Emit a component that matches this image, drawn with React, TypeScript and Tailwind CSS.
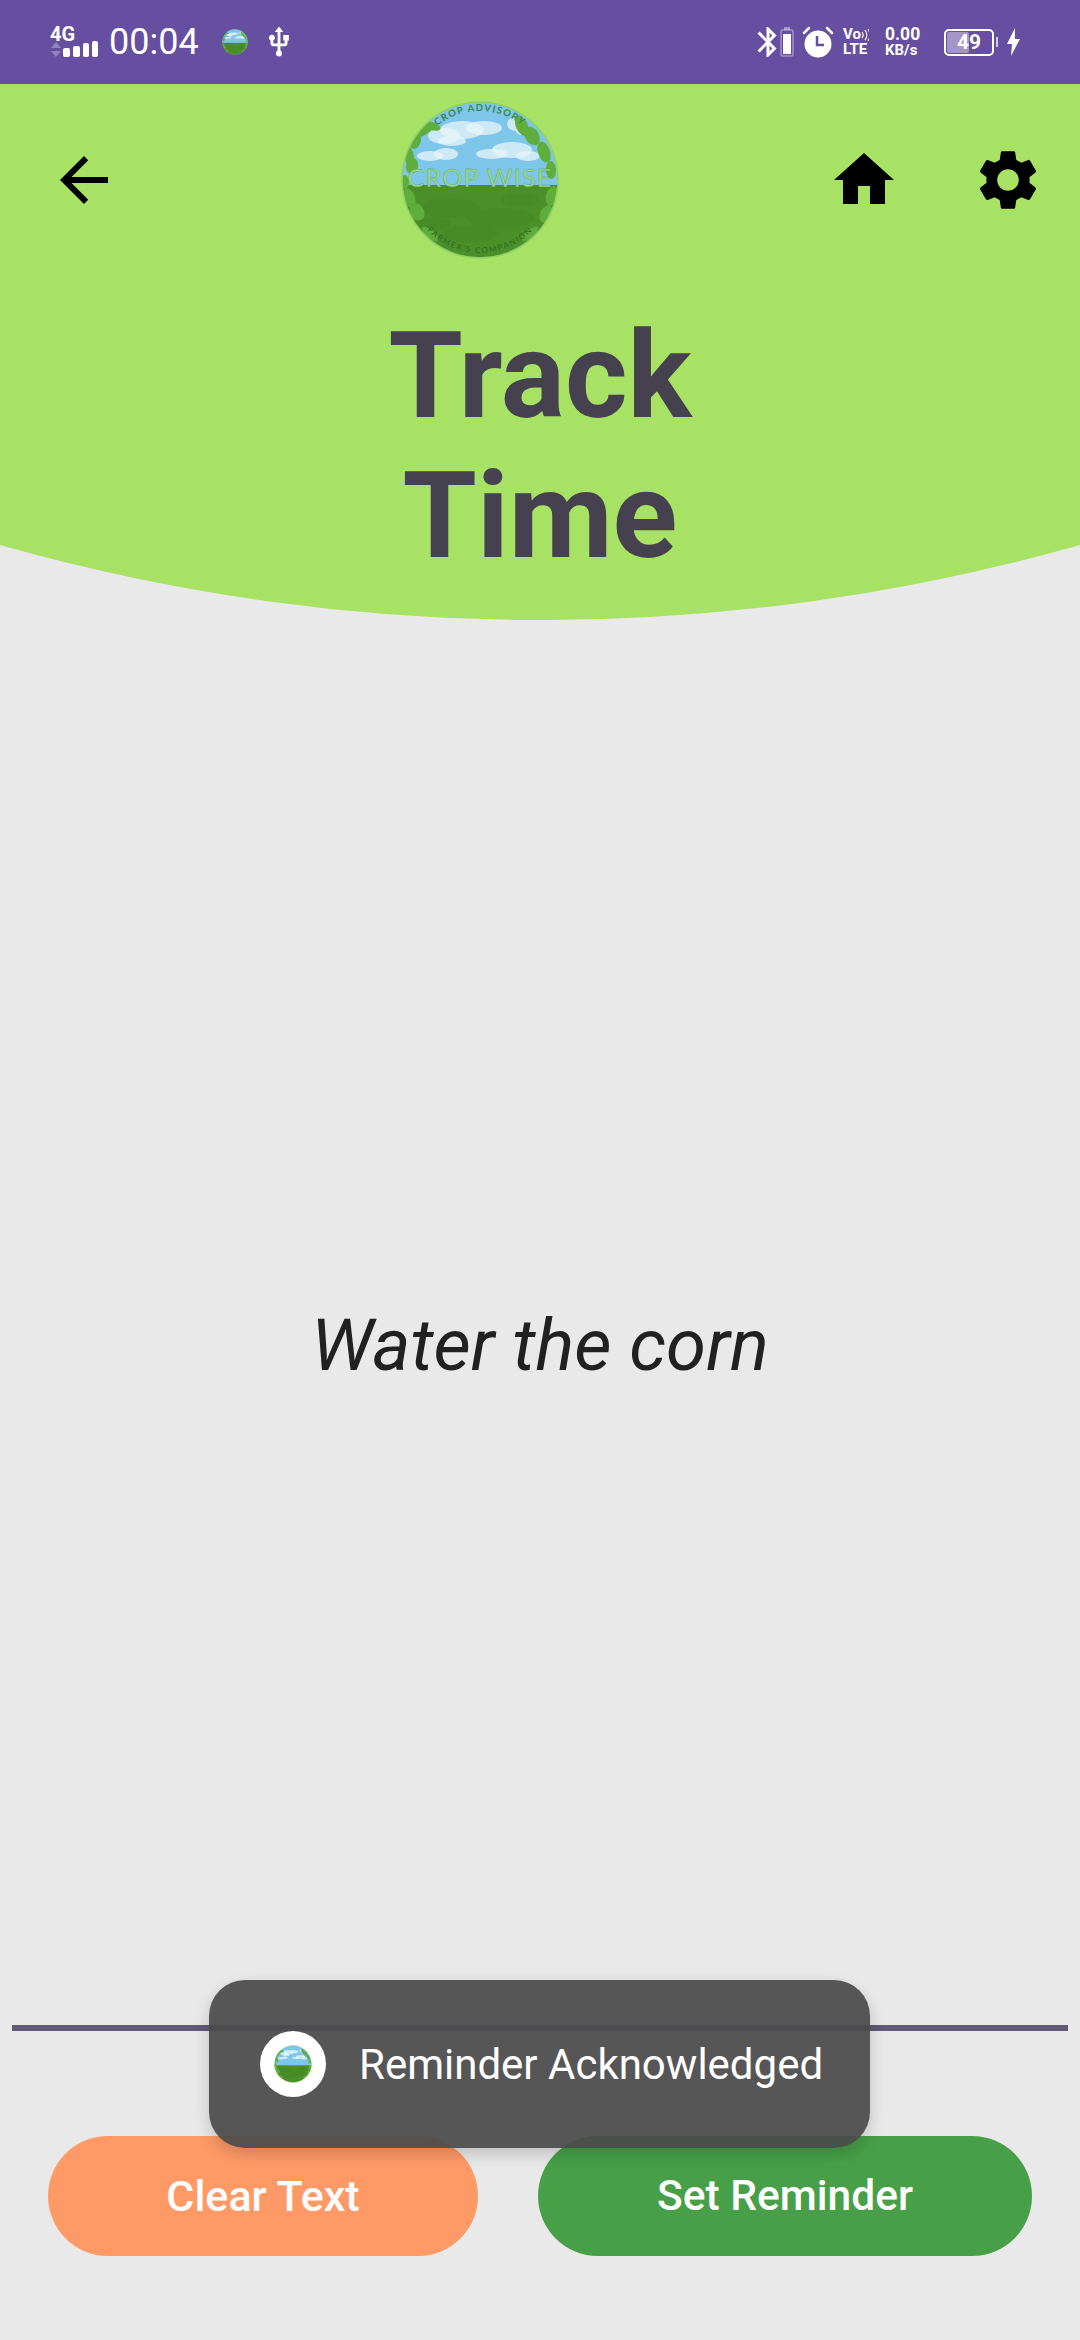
import { MdArrowBack, MdBluetooth, MdHome, MdSettings, MdUsb } from 'react-icons/md';

const leaves = [
  [24, 30, 12, 5, -35],
  [32, 26, 9, 4, 20],
  [15, 40, 6, 9, 10],
  [9, 56, 5, 10, -10],
  [12, 66, 6, 8, 15],
  [5, 82, 4, 7, 0],
  [9, 98, 6, 10, -20],
  [17, 112, 7, 9, -30],
  [30, 134, 10, 4, 40],
  [122, 26, 6, 11, -25],
  [132, 36, 7, 10, -30],
  [144, 52, 6, 11, -20],
  [151, 70, 5, 9, -5],
  [152, 96, 6, 10, 15],
  [146, 114, 6, 9, 25],
  [130, 134, 10, 4, -40],
];

const clouds = [
  [44, 36, 16, 8],
  [62, 30, 22, 9],
  [84, 28, 18, 7],
  [52, 41, 14, 5],
  [92, 54, 16, 5],
  [112, 50, 20, 8],
  [128, 56, 12, 5],
  [30, 56, 13, 5],
  [46, 54, 12, 6],
  [116, 24, 9, 7],
  [122, 31, 6, 4],
];

const grassPatches = [
  [50, 108, 30, 10],
  [100, 118, 34, 10],
  [70, 134, 28, 9],
  [120, 100, 18, 7],
  [34, 124, 16, 7],
];

// Crop Wise badge, drawn on a 160 unit canvas so it scales down for the small spots
const Logo = ({ className, id, detailed = false }: { className: string; id: string; detailed?: boolean }) => (
  <svg viewBox="0 0 160 160" className={className}>
    <defs>
      <clipPath id={`${id}-clip`}>
        <circle cx="80" cy="80" r="78" />
      </clipPath>
      <path id={`${id}-top`} d="M 11 80 A 69 69 0 0 1 149 80" />
      <path id={`${id}-bottom`} d="M 7 80 A 73 73 0 0 0 153 80" />
    </defs>
    <g clipPath={`url(#${id}-clip)`}>
      <rect width="160" height="86" fill="#7ec5ea" />
      <rect y="85" width="160" height="75" fill="#4a8f28" />
      {grassPatches.map(([cx, cy, rx, ry]) => (
        <ellipse key={`${cx}-${cy}`} cx={cx} cy={cy} rx={rx} ry={ry} fill="#478b27" />
      ))}
      {clouds.map(([cx, cy, rx, ry]) => (
        <ellipse key={`${cx}-${cy}`} cx={cx} cy={cy} rx={rx} ry={ry} fill="#e8f4fa" opacity="0.75" />
      ))}
      {leaves.map(([cx, cy, rx, ry, angle]) => (
        <ellipse
          key={`${cx}-${cy}`}
          cx={cx}
          cy={cy}
          rx={rx}
          ry={ry}
          fill="#5fae3c"
          transform={`rotate(${angle} ${cx} ${cy})`}
        />
      ))}
    </g>
    <circle cx="80" cy="80" r="78" fill="none" stroke="#8fcf6a" strokeWidth="1.500" />
    {detailed && (
      <g fontFamily="Lato, sans-serif">
        <text x="80" y="87" textAnchor="middle" fontSize="25" letterSpacing="1.300" fill="#96d98b" stroke="#4f9a4a" strokeWidth="0.300">
          CROP WISE
        </text>
        <text fontSize="9.500" fontWeight="700" letterSpacing="1.300" fill="#37864a">
          <textPath href={`#${id}-top`} startOffset="50%" textAnchor="middle">
            CROP ADVISORY
          </textPath>
        </text>
        <text fontSize="8" letterSpacing="1.600" fill="#2c6a24">
          <textPath href={`#${id}-bottom`} startOffset="50%" textAnchor="middle">
            FARMER&apos;S COMPANION
          </textPath>
        </text>
      </g>
    )}
  </svg>
);

const StatusBar = () => (
  <div className="flex h-[84px] shrink-0 items-center bg-[#664fa0] text-white font-[Roboto,sans-serif]">
    {/* network */}
    <div className="relative ml-[50px] h-[36px] w-[50px] shrink-0">
      <span className="absolute left-0 top-[-2px] text-[20px] font-bold leading-[24px]">4G</span>
      <svg viewBox="0 0 50 36" className="absolute left-0 top-0 h-[36px] w-[50px]">
        <path d="M1 24h10l-5-6z M1 27h10l-5 6z" fill="#ffffff" opacity="0.3" />
        <rect x="13" y="24" width="7" height="9" rx="2" fill="#ffffff" />
        <rect x="23" y="22" width="7" height="11" rx="2" fill="#ffffff" />
        <rect x="33" y="19" width="6" height="14" rx="2" fill="#ffffff" />
        <rect x="42" y="17" width="6" height="16" rx="2" fill="#ffffff" />
      </svg>
    </div>
    <span className="ml-[9px] w-[90px] shrink-0 text-[36px] leading-none">00:04</span>
    <Logo id="status-logo" className="ml-[23px] h-[26px] w-[26px] shrink-0" />
    <MdUsb className="ml-[14px] h-[34px] w-[34px] shrink-0" />

    {/* right side */}
    <MdBluetooth className="ml-[454px] h-[36px] w-[36px] shrink-0" />
    <svg viewBox="0 0 14 30" className="-ml-[6px] h-[30px] w-[14px] shrink-0">
      <rect x="1" y="3" width="12" height="26" rx="1.500" fill="none" stroke="#ffffff" strokeOpacity="0.4" strokeWidth="1.500" />
      <rect x="4" y="0" width="6" height="3" fill="#ffffff" fillOpacity="0.4" />
      <rect x="3" y="7" width="8" height="20" fill="#ffffff" />
    </svg>
    <svg viewBox="0 0 32 32" className="ml-[8px] h-[32px] w-[32px] shrink-0">
      <circle cx="16" cy="18" r="13.500" fill="#ffffff" />
      <path d="M15 10v9h7" fill="none" stroke="#664fa0" strokeWidth="2.500" />
      <path d="M2 7l5-5M30 7l-5-5" stroke="#ffffff" strokeWidth="2.500" strokeLinecap="round" />
    </svg>
    <div className="ml-[9px] flex w-[28px] shrink-0 flex-col items-start font-bold">
      <div className="flex h-[15px] items-center text-[15px] leading-none">
        Vo
        <svg viewBox="0 0 8 14" className="h-[14px] w-[8px]">
          <path d="M1 4a5 5 0 0 1 0 6M4 2a8 8 0 0 1 0 10M7 1a11 11 0 0 1 0 12" fill="none" stroke="#ffffff" strokeWidth="1.200" />
        </svg>
      </div>
      <span className="text-[15px] leading-[15px]">LTE</span>
    </div>
    <div className="ml-[14px] flex w-[36px] shrink-0 flex-col items-start font-bold">
      <span className="text-[17.500px] leading-[17px]">0.00</span>
      <span className="text-[15px] leading-[15px]">KB/s</span>
    </div>
    <div className="relative ml-[23px] h-[27px] w-[50px] shrink-0 rounded-[5px] border-2 border-white">
      <div className="absolute bottom-[1px] left-[1px] top-[1px] w-[22px] rounded-[2px] bg-white/40" />
      <span className="absolute inset-0 flex items-center justify-center text-[21px] font-bold leading-none">49</span>
      <div className="absolute right-[-6px] top-[6px] h-[10px] w-[2px] bg-white/70" />
    </div>
    <svg viewBox="0 0 14 28" className="ml-[13px] h-[28px] w-[14px] shrink-0">
      <path d="M8 0L0 16h5l-1 12 9-17H8z" fill="#ffffff" />
    </svg>
  </div>
);

const Header = () => (
  <div className="relative h-[536px] shrink-0 font-[Roboto,sans-serif]">
    <svg viewBox="0 0 1080 536" className="absolute inset-0 h-[536px] w-[1080px]">
      <path d="M0 0H1080V461A1981 1981 0 0 1 0 461z" fill="#a8e264" />
    </svg>
    <div className="relative flex h-[176px] items-center pt-[16px]">
      <MdArrowBack className="ml-[48px] h-[72px] w-[72px] shrink-0" />
      <Logo id="header-logo" detailed className="ml-[280px] h-[160px] w-[160px] shrink-0" />
      <MdHome className="ml-[268px] h-[72px] w-[72px] shrink-0" />
      <MdSettings className="ml-[72px] h-[72px] w-[72px] shrink-0" />
    </div>
    <h1 className="relative mt-[46px] text-center text-[120px] font-bold leading-[140px] text-[#45414e]">
      Track
      <br />
      Time
    </h1>
  </div>
);

export default function App() {
  return (
    <div className="relative flex h-[2340px] w-[1080px] flex-col overflow-hidden bg-[#e9e9e9] font-[Roboto,sans-serif]">
      <StatusBar />
      <Header />

      {/* Reminder text */}
      <div className="flex flex-1 items-center justify-center pt-[48px]">
        <p className="text-[72.500px] italic text-[#212121]">Water the corn</p>
      </div>

      <div className="mx-[12px] h-[6px] bg-[#605a75]" />

      {/* Actions */}
      <div className="mb-[84px] mt-[105px] flex px-[48px]">
        <button className="h-[120px] w-[430px] rounded-[60px] bg-[#ff9a66] text-[43px] font-medium text-white">
          Clear Text
        </button>
        <button className="ml-[60px] h-[120px] w-[494px] rounded-[60px] bg-[#47a047] text-[42.500px] font-medium text-white">
          Set Reminder
        </button>
      </div>

      {/* Toast */}
      <div className="absolute left-[209px] top-[1980px] flex h-[168px] w-[661px] items-center rounded-[36px] bg-[#4a4a4a]/93 pl-[51px] shadow-[0_6px_16px_rgba(0,0,0,0.18)]">
        <div className="flex h-[66px] w-[66px] items-center justify-center rounded-full bg-white">
          <Logo id="toast-logo" className="h-[38px] w-[38px]" />
        </div>
        <span className="ml-[33px] text-[42px] text-white">Reminder Acknowledged</span>
      </div>
    </div>
  );
}
